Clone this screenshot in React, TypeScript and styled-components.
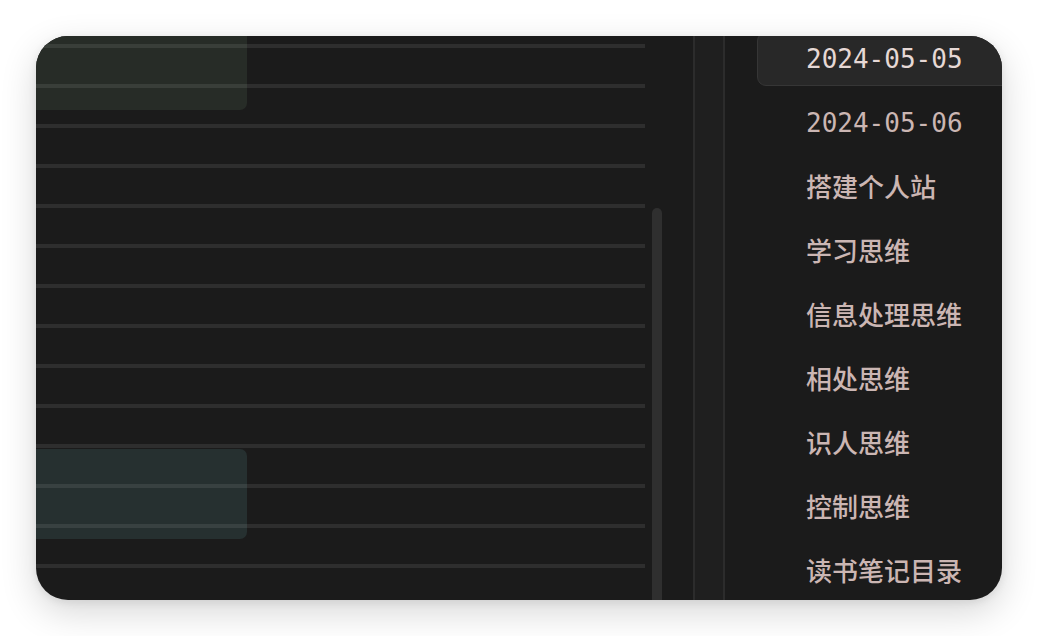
import React from "react";
import styled, { createGlobalStyle } from "styled-components";

const Global = createGlobalStyle`
  html, body { margin: 0; padding: 0; background: #ffffff; }
  body { font-family: "Noto Sans", "Noto Sans CJK SC", sans-serif; }
`;

const Page = styled.div`
  width: 1038px;
  height: 636px;
  padding: 36px;
  box-sizing: border-box;
  background: #ffffff;
`;

const Card = styled.div`
  width: 966px;
  height: 564px;
  border-radius: 32px;
  overflow: hidden;
  background: #1b1b1b;
  display: flex;
  box-shadow: 0 12px 36px rgba(0, 0, 0, 0.16), 0 2px 8px rgba(0, 0, 0, 0.08);
`;

const Editor = styled.div`
  position: relative;
  width: 657px;
  flex: none;
  display: flex;
`;

const Lines = styled.div`
  position: relative;
  z-index: 1;
  width: 609px;
  padding-top: 8px;
  display: flex;
  flex-direction: column;
`;

const Line = styled.div`
  height: 36px;
  border-top: 4px solid rgba(255, 255, 255, 0.085);
  flex: none;
`;

const Highlight = styled.div<{ $top: number; $height: number; $tint: string }>`
  position: absolute;
  left: -20px;
  width: 231px;
  top: ${(p) => p.$top}px;
  height: ${(p) => p.$height}px;
  background: ${(p) => p.$tint};
  border-radius: 7px;
`;

const ScrollTrack = styled.div`
  margin-left: 7px;
  padding-top: 172px;
  width: 10px;
`;

const Thumb = styled.div`
  width: 10px;
  height: 420px;
  border-radius: 5px;
  background: #2f2f2f;
`;

const Gutter = styled.div`
  width: 28px;
  flex: none;
  background: #1f1f1f;
  border-left: 2px solid #2c2c2c;
  border-right: 2px solid #2c2c2c;
`;

const Sidebar = styled.div`
  flex: 1;
  padding-left: 32px;
  margin-top: -4px;
  display: flex;
  flex-direction: column;
  gap: 10px;
`;

const Item = styled.div<{ $active?: boolean; $mono?: boolean }>`
  height: 54px;
  flex: none;
  box-sizing: border-box;
  display: flex;
  align-items: center;
  padding-left: 48px;
  padding-bottom: ${(p) => (p.$mono ? 0 : 4)}px;
  margin-right: -20px;
  border-radius: 9px;
  border: 1px solid ${(p) => (p.$active ? "#363636" : "transparent")};
  background: ${(p) => (p.$active ? "#282828" : "transparent")};
  color: ${(p) => (p.$active ? "#e6d8d5" : "#cbb6b3")};
  font-size: 26px;
  font-weight: ${(p) => (p.$mono ? 400 : 500)};
  white-space: nowrap;
  font-family: ${(p) =>
    p.$mono
      ? `"DejaVu Sans Mono", "Liberation Mono", monospace`
      : `"Noto Sans CJK SC", "Noto Sans", sans-serif`};
`;

const items: { label: string; mono?: boolean; active?: boolean }[] = [
  { label: "2024-05-05", mono: true, active: true },
  { label: "2024-05-06", mono: true },
  { label: "搭建个人站" },
  { label: "学习思维" },
  { label: "信息处理思维" },
  { label: "相处思维" },
  { label: "识人思维" },
  { label: "控制思维" },
  { label: "读书笔记目录" },
];

export default function App() {
  return (
    <>
      <Global />
      <Page>
        <Card>
          <Editor>
            <Highlight $top={-20} $height={94} $tint="#272c27" />
            <Highlight $top={413} $height={90} $tint="#263030" />
            <Lines>
              {Array.from({ length: 14 }).map((_, i) => (
                <Line key={i} />
              ))}
            </Lines>
            <ScrollTrack>
              <Thumb />
            </ScrollTrack>
          </Editor>
          <Gutter />
          <Sidebar>
            {items.map((it) => (
              <Item key={it.label} $active={it.active} $mono={it.mono}>
                {it.label}
              </Item>
            ))}
          </Sidebar>
        </Card>
      </Page>
    </>
  );
}
